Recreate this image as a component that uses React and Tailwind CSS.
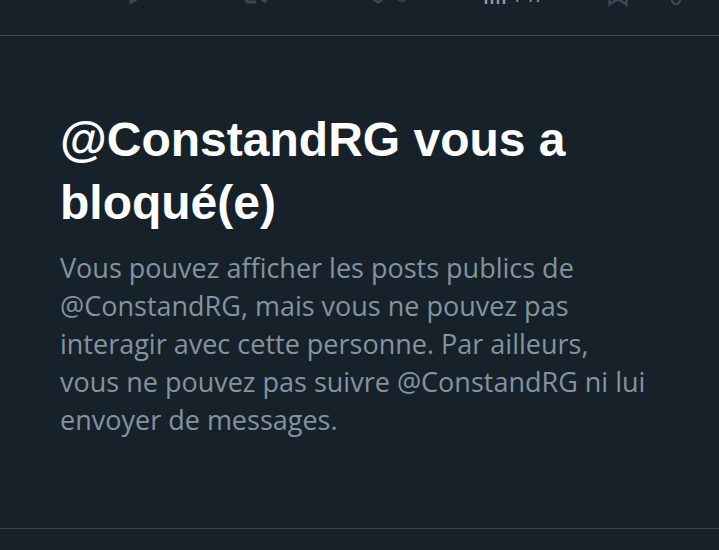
import React from 'react';

const actions = [
  {
    label: 'Répondre',
    icon: <path d="M12.5 12V24.5L23 19" fill="currentColor" stroke="none" />,
  },
  {
    label: 'Reposter',
    icon: <path d="M11 6V19Q11 22 14 22H21M25 17L29.5 21.5L34 17" />,
  },
  {
    label: 'Aimer',
    count: '0',
    icon: <path d="M18 22.5C12 18 6 13 6 8C6 3 15 2 18 7C21 2 30 3 30 8C30 13 24 18 18 22.5Z" strokeWidth="2.5" />,
  },
  {
    label: 'Vues',
    count: '147',
    icon: <path d="M11 12V24M17 4V24M23 8V24M29 2V24" strokeWidth="2.5" />,
  },
  {
    label: 'Signet',
    icon: <path d="M14.5 2V24.5L23 19L31.5 24.5V2Z" strokeWidth="2.5" />,
  },
  {
    label: 'Partager',
    icon: <path d="M15 3V20A4 4 0 0 0 23 20V3" strokeWidth="2.5" />,
  },
];

const PostActions = () => (
  <div className="overflow-hidden border-b border-[#3a444c]">
    <div className="-mt-5 grid h-[55px] grid-cols-[118fr_125fr_115fr_120fr_62fr_62fr] items-start pl-[117px] text-[#3d4852]">
      {actions.map(({ label, count, icon }) => (
        <button
          key={label}
          type="button"
          aria-label={label}
          className={`flex items-start ${label === 'Vues' ? 'text-[#8b98a5]' : ''}`}
        >
          <svg viewBox="0 0 36 28" className="h-7 w-9 shrink-0" fill="none" stroke="currentColor" strokeWidth="3">
            {icon}
          </svg>
          {count && <span className="text-xl leading-[30px]">{count}</span>}
        </button>
      ))}
    </div>
  </div>
);

const BlockedNotice = () => (
  <section className="border-b border-[#3a444c] pl-15 pr-[66px] pt-18 pb-[89px]">
    <h1 className="font-['Liberation_Sans',sans-serif] text-[48px] leading-[63px] font-bold text-white">
      @ConstandRG vous a bloqué(e)
    </h1>
    <p className="mt-[15px] text-[27px] leading-[38px] text-[#8393a0]">
      Vous pouvez afficher les posts publics de @ConstandRG, mais vous ne pouvez pas interagir avec cette personne. Par
      ailleurs, vous ne pouvez pas suivre @ConstandRG ni lui envoyer de messages.
    </p>
  </section>
);

const App = () => (
  <main className="min-h-screen bg-[#17212a] font-['Open_Sans',sans-serif]">
    <PostActions />
    <BlockedNotice />
  </main>
);

export default App;
